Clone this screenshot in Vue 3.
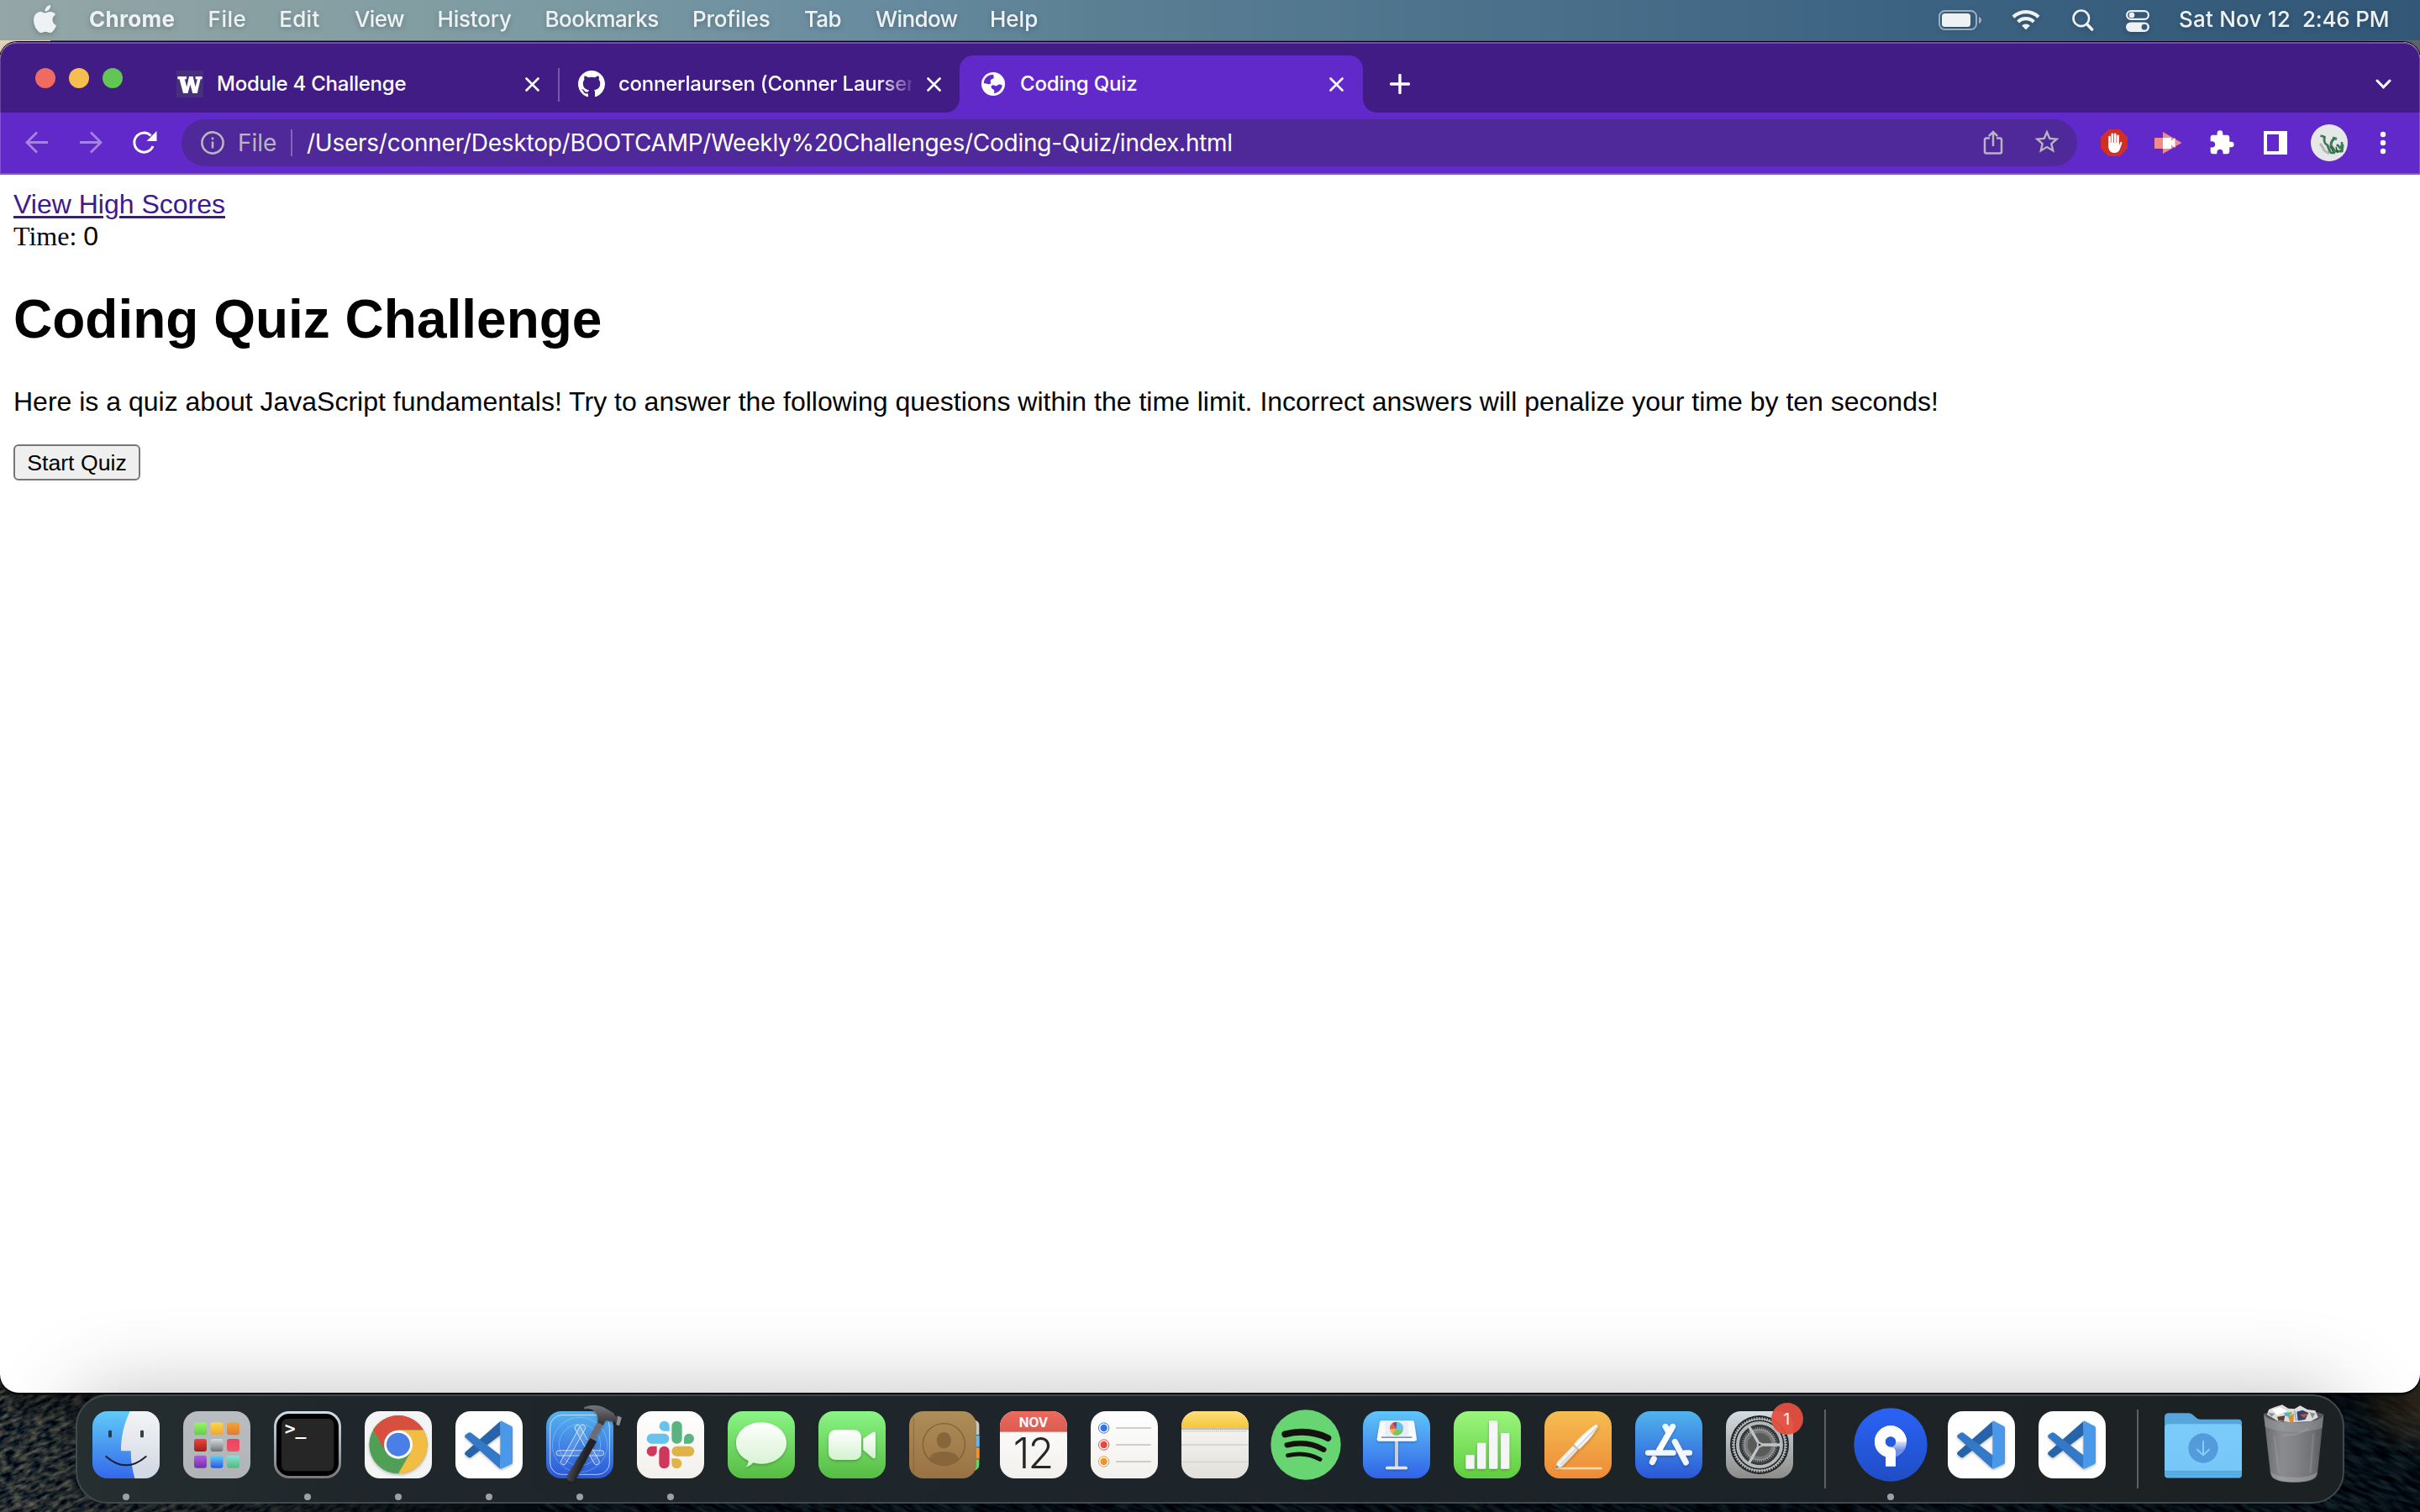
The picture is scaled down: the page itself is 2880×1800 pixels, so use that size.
<script setup>
const menus = [
  { label: 'Chrome', width: 141.6, spacing: 0.3, bold: true },
  { label: 'File', width: 84.6, spacing: 0.5 },
  { label: 'Edit', width: 89.8, spacing: 0.3 },
  { label: 'View', width: 98.5, spacing: -0.6 },
  { label: 'History', width: 128, spacing: -0.2 },
  { label: 'Bookmarks', width: 175.5, spacing: -0.5 },
  { label: 'Profiles', width: 133, spacing: -0.2 },
  { label: 'Tab', width: 85, spacing: -0.7 },
  { label: 'Window', width: 136, spacing: -0.6 },
  { label: 'Help', width: 60, spacing: 0 },
]

const dock = [
  { id: 'finder', running: true },
  { id: 'launchpad' },
  { id: 'terminal', running: true },
  { id: 'chrome', running: true },
  { id: 'vscode', running: true },
  { id: 'xcode', running: true },
  { id: 'slack', running: true },
  { id: 'messages' },
  { id: 'facetime' },
  { id: 'contacts' },
  { id: 'calendar' },
  { id: 'reminders' },
  { id: 'notes' },
  { id: 'spotify' },
  { id: 'keynote' },
  { id: 'numbers' },
  { id: 'pages' },
  { id: 'appstore' },
  { id: 'settings' },
  { id: 'sep1', separator: true },
  { id: 'sourcetree', running: true },
  { id: 'vscode', key: 'vscode2' },
  { id: 'vscode', key: 'vscode3' },
  { id: 'sep2', separator: true },
  { id: 'downloads' },
  { id: 'trash' },
]

const pads = [
  ['#9bf26e', '#5fd043'], ['#fbd54b', '#f0a735'], ['#f3a637', '#dd7a33'],
  ['#e8463a', '#a61d18'], ['#d5dde2', '#6d7276'], ['#e8435e', '#ee5468'],
  ['#b45ce6', '#7131a8'], ['#5cd4fa', '#2c55e3'], ['#86e3e0', '#57b778'],
]

const gradients = [
  ['gFinder', '#60cbf8', '#3468ea'],
  ['gFace', '#f4f4f6', '#cfd7e4'],
  ['gPad', '#babdbf', '#b1b4b6'],
  ['gTerm', '#cfe0ea', '#77777a'],
  ['gXcode', '#56b4ee', '#2b56da'],
  ['gGreen', '#8af585', '#56bc43'],
  ['gBubble', '#ffffff', '#d3f2cf'],
  ['gBrown', '#ad8d58', '#997244'],
  ['gRed', '#ec6a5e', '#da5c50'],
  ['gPaper', '#ffffff', '#f1f0ec'],
  ['gYellow', '#fbe07a', '#f6c539'],
  ['gNotes', '#faf9f7', '#e2e0da'],
  ['gKeynote', '#5fc6fa', '#3163e7'],
  ['gNumbers', '#9bf57c', '#5fce40'],
  ['gPages', '#f5bd50', '#ee8b38'],
  ['gStore', '#50b4ee', '#2a57d8'],
  ['gGear', '#d3dde3', '#8e8c89'],
  ['gSource', '#2a63f6', '#1f4dc4'],
  ['gFolder', '#7bcbfa', '#76c7f8'],
  ['gSilver', '#ffffff', '#d9dbe0'],
]

const ticks = (n) => Array.from({ length: n }, (_, i) => (360 / n) * i)
</script>

<template>
  <div class="desktop">
    <svg class="wallpaper" viewBox="0 0 2880 1800">
      <defs>
        <filter id="rock" x="0" y="0" width="100%" height="100%" color-interpolation-filters="sRGB">
          <feTurbulence type="fractalNoise" baseFrequency="0.08 0.2" numOctaves="4" seed="5" />
          <feColorMatrix values="0.9 0 0 0 -0.27  0.75 0 0 0 -0.17  0.5 0 0 0 -0.04  0 0 0 0 1" />
        </filter>
        <filter id="water" x="0" y="0" width="100%" height="100%" color-interpolation-filters="sRGB">
          <feTurbulence type="fractalNoise" baseFrequency="0.04 0.2" numOctaves="4" seed="9" />
          <feColorMatrix values="0.25 0 0 0 -0.1  0.3 0 0 0 -0.085  0.32 0 0 0 -0.065  0 0 0 0 1" />
        </filter>
        <linearGradient id="shoreFade" x1="0" x2="1" y1="0" y2="0">
          <stop offset="0" stop-color="#050d12" stop-opacity="0" />
          <stop offset="0.2" stop-color="#050d12" stop-opacity="0.2" />
          <stop offset="1" stop-color="#050d12" stop-opacity="1" />
        </linearGradient>
        <radialGradient id="outcrop" cx="2880" cy="1655" r="85" gradientUnits="userSpaceOnUse">
          <stop offset="0" stop-color="#5b4524" stop-opacity="0.6" />
          <stop offset="0.6" stop-color="#46361f" stop-opacity="0.4" />
          <stop offset="1" stop-color="#2a2216" stop-opacity="0" />
        </radialGradient>
      </defs>
      <rect width="60" height="120" y="0" fill="#e6d6b9" />
      <rect x="60" width="2760" height="60" y="0" fill="#52606c" />
      <rect x="2820" width="60" height="120" y="0" fill="#5c6570" />
      <g transform="rotate(25 1400 1700)">
        <rect x="0" y="900" width="2900" height="1500" filter="url(#water)" />
      </g>
      <g transform="rotate(-24 100 1700)">
        <rect x="-200" y="1400" width="720" height="600" filter="url(#rock)" opacity="0.9" />
      </g>
      <rect x="0" y="1500" width="640" height="300" fill="url(#shoreFade)" />
      <rect x="2780" y="1600" width="100" height="130" fill="url(#outcrop)" />
    </svg>

    <svg class="defs" width="0" height="0">
      <defs>
        <linearGradient v-for="g in gradients" :id="g[0]" :key="g[0]" x1="0" y1="0" x2="0" y2="1">
          <stop offset="0" :stop-color="g[1]" />
          <stop offset="1" :stop-color="g[2]" />
        </linearGradient>
        <linearGradient v-for="(p, i) in pads" :id="'pad' + i" :key="i" x1="0" y1="0" x2="0" y2="1">
          <stop offset="0" :stop-color="p[0]" />
          <stop offset="1" :stop-color="p[1]" />
        </linearGradient>
        <linearGradient id="gBin" x1="0" y1="0" x2="1" y2="0">
          <stop offset="0" stop-color="#6c6e71" />
          <stop offset="0.3" stop-color="#8f9194" />
          <stop offset="0.55" stop-color="#85878a" />
          <stop offset="0.8" stop-color="#747679" />
          <stop offset="1" stop-color="#5a5c5f" />
        </linearGradient>
        <linearGradient id="gHandle" x1="0" y1="0" x2="1" y2="0.5">
          <stop offset="0.35" stop-color="#4a4a50" />
          <stop offset="0.65" stop-color="#222226" />
        </linearGradient>
        <linearGradient id="gHead" x1="0" y1="0" x2="0" y2="1">
          <stop offset="0" stop-color="#75757b" />
          <stop offset="1" stop-color="#2d2d31" />
        </linearGradient>
        <linearGradient id="gRing" x1="0" y1="0" x2="0" y2="1">
          <stop offset="0.35" stop-color="#fff" />
          <stop offset="0.9" stop-color="#fff" stop-opacity="0.35" />
        </linearGradient>
        <filter id="soft" x="-20%" y="-20%" width="140%" height="150%">
          <feDropShadow dx="0" dy="4" stdDeviation="4" flood-color="#000" flood-opacity="0.28" />
        </filter>
      </defs>
    </svg>

    <header class="menubar">
      <svg class="apple" width="27" height="33" viewBox="2.2 0 19.6 24" preserveAspectRatio="none">
        <path fill="currentColor" d="M12.152 6.896c-.948 0-2.415-1.078-3.96-1.04-2.04.027-3.91 1.183-4.961 3.014-2.117 3.675-.546 9.103 1.519 12.09 1.013 1.454 2.208 3.09 3.792 3.039 1.52-.065 2.09-.987 3.935-.987 1.831 0 2.35.987 3.96.948 1.637-.026 2.676-1.48 3.676-2.948 1.156-1.688 1.636-3.325 1.662-3.415-.039-.013-3.182-1.221-3.22-4.857-.026-3.04 2.48-4.494 2.597-4.559-1.429-2.09-3.623-2.324-4.39-2.376-2-.156-3.675 1.09-4.61 1.09zM15.53 3.83c.843-1.012 1.4-2.427 1.245-3.83-1.207.052-2.662.805-3.532 1.818-.78.896-1.454 2.338-1.273 3.714 1.338.104 2.715-.688 3.559-1.701" />
      </svg>
      <nav class="menus">
        <span
          v-for="m in menus"
          :key="m.label"
          class="menu"
          :class="{ bold: m.bold }"
          :style="{ width: m.width + 'px', letterSpacing: m.spacing + 'px' }"
        >{{ m.label }}</span>
      </nav>
      <div class="status">
        <svg class="battery" width="52" height="24" viewBox="0 0 52 24">
          <rect x="1" y="1" width="44" height="22" rx="6.5" fill="none" stroke="#fff" stroke-opacity=".5" stroke-width="2" />
          <rect x="4" y="4" width="34" height="16" rx="3.5" fill="currentColor" />
          <path d="M48 8 q3 1 3 4 t-3 4z" fill="#fff" fill-opacity=".5" />
        </svg>
        <svg class="wifi" width="34" height="25" viewBox="0 0 34 25">
          <g fill="none" stroke="currentColor" stroke-width="4.2">
            <path d="M2 9.2 a21.5 21.5 0 0 1 30 0" />
            <path d="M7.6 15 a13.5 13.5 0 0 1 18.8 0" />
          </g>
          <path d="M17 24.5 l-4.9 -5 a7 7 0 0 1 9.8 0z" fill="currentColor" />
        </svg>
        <svg class="search" width="26" height="26" viewBox="0 0 26 26" fill="none" stroke="currentColor">
          <circle cx="10.8" cy="10.8" r="9.3" stroke-width="2.6" />
          <path d="M17.6 17.8 L23.6 24" stroke-width="3.6" stroke-linecap="round" />
        </svg>
        <svg class="control" width="28" height="26" viewBox="0 0 28 26">
          <rect x="1.1" y="1.1" width="25.8" height="9.8" rx="4.9" fill="none" stroke="currentColor" stroke-width="2.2" />
          <circle cx="7" cy="6" r="3.3" fill="currentColor" />
          <rect x="0" y="14.4" width="28" height="11.6" rx="5.8" fill="currentColor" />
          <circle cx="22" cy="20.2" r="3.4" fill="#355b7c" />
        </svg>
        <span class="date">Sat Nov 12</span>
        <span class="clock">2:46 PM</span>
      </div>
    </header>

    <main class="window">
      <div class="tabstrip">
        <div class="lights"><i class="red" /><i class="amber" /><i class="green" /></div>
        <div class="tab first">
          <svg width="32" height="32" viewBox="0 0 32 32">
            <rect width="32" height="32" fill="#46307c" />
            <path fill="#fff" d="M1.400 7H12v3.200H9.800l2.500 9.200L15 7h4.600l3 12.400 2.200-9.200h-2.200V7h8v3.200h-2L24.800 27h-5.600L16.400 16.500 13.600 27H8L3.600 10.200H1.400z" />
          </svg>
          <span class="title">Module 4 Challenge</span>
          <svg class="close" width="17" height="17" viewBox="0 0 17 17"><path d="M1.500 1.500L15.500 15.500M15.500 1.500L1.500 15.500" /></svg>
        </div>
        <div class="tab second">
          <svg width="32" height="32" viewBox="0 0 16 16">
            <path fill="#fff" d="M8 0C3.58 0 0 3.58 0 8c0 3.54 2.29 6.53 5.47 7.59.4.07.55-.17.55-.38 0-.19-.01-.82-.01-1.49-2.01.37-2.53-.49-2.69-.94-.09-.23-.48-.94-.82-1.13-.28-.15-.68-.52-.01-.53.63-.01 1.08.58 1.23.82.72 1.21 1.87.87 2.33.66.07-.52.28-.87.51-1.07-1.78-.2-3.64-.89-3.64-3.95 0-.87.31-1.59.82-2.15-.08-.2-.36-1.02.08-2.12 0 0 .67-.21 2.2.82.64-.18 1.32-.27 2-.27.68 0 1.36.090 2 .27 1.530-1.040 2.200-.82 2.200-.82.44 1.100.16 1.920.080 2.120.51.56.82 1.270.82 2.150 0 3.070-1.870 3.750-3.650 3.950.29.25.54.73.54 1.480 0 1.070-.01 1.930-.01 2.200 0 .21.15.46.55.38A8.013 8.013 0 0016 8c0-4.420-3.580-8-8-8z" />
          </svg>
          <span class="title fade">connerlaursen (Conner Laursen)</span>
          <svg class="close" width="17" height="17" viewBox="0 0 17 17"><path d="M1.500 1.500L15.500 15.500M15.500 1.500L1.500 15.500" /></svg>
        </div>
        <div class="tab active">
          <svg width="28" height="28" viewBox="0 0 28 28">
            <circle cx="14" cy="14" r="14" fill="#fff" />
            <path fill="#6129ca" d="M14.500 2.800C13.500 5 16 6 14 7.500c-1.500 1-3 .5-3.300 2.500-.3 1.500 1 1.800.3 3.200-.8 1.300-3 1-4.500.6L2.800 13C3 7.500 7.500 2.900 14.500 2.800z" />
            <path fill="#6129ca" d="M11.500 17.500c0-2.200 3-3 4.200-1.700 1 1.200 2.800.2 3.800-.6 1.200-1 3.600-1.200 5.200.8-.8 4.600-4.600 8.600-9.800 9.100-.4-1 .6-1.600.5-3-.2-2-3.900-2-3.900-4.600z" />
          </svg>
          <span class="title">Coding Quiz</span>
          <svg class="close" width="17" height="17" viewBox="0 0 17 17"><path d="M1.500 1.500L15.500 15.500M15.500 1.500L1.500 15.500" /></svg>
        </div>
        <svg class="plus" width="24" height="24" viewBox="0 0 24 24"><path d="M12 1.500V22.500M1.500 12H22.500" /></svg>
        <svg class="chevron" width="19" height="13" viewBox="0 0 19 13"><path d="M2 2L9.500 9.800L17 2" /></svg>
      </div>

      <div class="toolbar">
        <svg class="tool dim" viewBox="0 0 64 64"><path d="M45 31.500H20M32 19.500L20 31.500L32 43.500" /></svg>
        <svg class="tool dim" viewBox="0 0 64 64"><path d="M19 31.500H44M32 19.500L44 31.500L32 43.500" /></svg>
        <svg class="tool" viewBox="0 0 64 64">
          <path d="M42 36A11.500 11.500 0 1 1 39.500 23.500" stroke-width="3" />
          <path d="M46.500 18V30H34.500z" fill="#fff" stroke="none" />
        </svg>
        <div class="omnibox">
          <svg width="28" height="28" viewBox="0 0 28 28">
            <circle cx="14" cy="14" r="12.600" fill="none" stroke="#b9b5bf" stroke-width="2.600" />
            <path d="M12.700 12.500h2.600v8h-2.600zM12.700 7.500h2.600v2.700h-2.600z" fill="#b9b5bf" />
          </svg>
          <span class="scheme">File</span>
          <i class="bar" />
          <span class="url">/Users/conner/Desktop/BOOTCAMP/Weekly%20Challenges/Coding-Quiz/index.html</span>
          <svg class="tool grey" viewBox="0 0 64 64">
            <path d="M28 26.500H24a2 2 0 0 0 -2 2V42.500a2 2 0 0 0 2 2H40a2 2 0 0 0 2 -2V28.500a2 2 0 0 0 -2 -2H36M32 36V19.500M26.800 24.200L32 19L37.200 24.200" stroke-width="2.500" />
          </svg>
          <svg class="tool grey" viewBox="0 0 64 64">
            <path transform="translate(14.600 13.300) scale(1.45)" fill="#b9b5bf" stroke="none" d="M22 9.240l-7.190-.62L12 2 9.190 8.630 2 9.240l5.460 4.730L5.820 21 12 17.270 18.180 21l-1.630-7.030L22 9.240zM12 15.400l-3.760 2.270 1-4.280-3.320-2.880 4.380-.38L12 6.100l1.710 4.040 4.380.38-3.320 2.880 1 4.280L12 15.400z" />
          </svg>
        </div>
        <svg class="tool" viewBox="0 0 64 64">
          <path d="M25.300 16H38.700L48 25.300V38.700L38.700 48H25.300L16 38.700V25.300z" fill="#d12f26" stroke="none" />
          <path d="M26.500 36V25M29.800 32V21.800M33.200 32V21.800M36.500 34V23.800" stroke-width="2.600" stroke-linecap="round" />
          <path d="M25.200 32H37.800v3.500l1.700-4.500q2.400-.8 1.800 1.800L38.700 40q-1.800 4-6.500 4q-5.500 0-7-6z" fill="#fff" stroke="none" />
        </svg>
        <svg class="tool" viewBox="0 0 64 64">
          <path d="M26 19L48.500 32L26 45V39H16V26H26z" fill="#f08a8e" stroke="none" />
          <path d="M26 26H36V29.500L40.500 26V38L36 34.500V39H26z" fill="#fff" stroke="none" />
        </svg>
        <svg class="tool" viewBox="0 0 64 64">
          <path transform="translate(16 16) scale(1.33)" fill="#fff" stroke="none" d="M20.500 11H19V7c0-1.100-.9-2-2-2h-4V3.500a2.500 2.500 0 0 0-5 0V5H4c-1.100 0-1.990.9-1.990 2v3.800H3.500c1.490 0 2.700 1.210 2.700 2.700s-1.210 2.700-2.700 2.700H2V20c0 1.100.9 2 2 2h3.800v-1.500c0-1.490 1.210-2.700 2.700-2.700 1.490 0 2.700 1.210 2.700 2.700V22H17c1.100 0 2-.9 2-2v-4h1.500a2.500 2.500 0 0 0 0-5z" />
        </svg>
        <svg class="tool" viewBox="0 0 64 64">
          <path fill="#fff" stroke="none" fill-rule="evenodd" d="M18 18H46V46H18zM22 22V42H36V22z" />
        </svg>
        <svg class="tool" viewBox="0 0 64 64">
          <circle cx="32" cy="32" r="22" fill="#e6e8e7" stroke="none" />
          <path d="M21 33q3 3 5 8l6 4" stroke="#b3b9b6" stroke-width="3" />
          <g fill="none" stroke="#3c7a55" stroke-linejoin="round">
            <path d="M21.500 23.500l5 1.500q-2 7 3.500 10 l3 8" stroke-width="2.800" />
            <path d="M36 26l5 1.500M38 27q-4 3-4 8l5 7h8l1-7-3 3-4-4" stroke-width="3" />
            <path d="M30 36l4 8h5M47 31v12" stroke-width="2.600" />
          </g>
          <path d="M33 36l4 7M40 37l2 7" stroke="#23533a" stroke-width="1.500" />
        </svg>
        <svg class="tool" viewBox="0 0 64 64">
          <g fill="#fff" stroke="none"><circle cx="32" cy="22" r="3.200" /><circle cx="32" cy="32" r="3.200" /><circle cx="32" cy="42" r="3.200" /></g>
        </svg>
      </div>

      <section class="page">
        <a class="scores">View High Scores</a>
        <div class="timer">Time: <span>0</span></div>
        <h1>Coding Quiz Challenge</h1>
        <p>Here is a quiz about JavaScript fundamentals! Try to answer the following questions within the time limit. Incorrect answers will penalize your time by ten seconds!</p>
        <button type="button">Start Quiz</button>
      </section>
    </main>

    <footer class="dock">
      <template v-for="app in dock" :key="app.key || app.id">
        <i v-if="app.separator" class="separator" />
        <div v-else class="cell">
          <svg class="icon" viewBox="0 0 240 240">
            <g v-if="app.id === 'finder'">
              <clipPath id="cFinder"><rect width="240" height="240" rx="54" /></clipPath>
              <g clip-path="url(#cFinder)">
                <rect width="240" height="240" fill="url(#gFinder)" />
                <path d="M134 0C110 50 102 98 102 138q0 4 4 4H137C137 178 143 212 151 240H240V0z" fill="url(#gFace)" />
              </g>
              <rect x="57" y="68" width="12" height="26" rx="4" fill="#2b3a48" />
              <rect x="171" y="68" width="12" height="26" rx="4" fill="#3a3c40" />
              <path d="M49 162Q120 224 191 162" fill="none" stroke="#16202c" stroke-width="6" stroke-linecap="round" />
            </g>

            <g v-else-if="app.id === 'launchpad'">
              <rect width="240" height="240" rx="54" fill="url(#gPad)" />
              <rect v-for="(p, i) in pads" :key="i" :x="39 + (i % 3) * 58.500" :y="40 + Math.floor(i / 3) * 59" width="45" height="45" rx="9" :fill="'url(#pad' + i + ')'" />
            </g>

            <g v-else-if="app.id === 'terminal'">
              <rect width="240" height="240" rx="54" fill="url(#gTerm)" />
              <rect x="9" y="9" width="222" height="222" rx="46" fill="#000" />
              <rect x="27" y="27" width="187" height="187" rx="20" fill="#262626" />
              <text x="38" y="84" class="prompt">&gt;_</text>
            </g>

            <g v-else-if="app.id === 'chrome'">
              <rect width="240" height="240" rx="54" fill="#f4f4f4" />
              <g transform="translate(120 119)">
                <g filter="url(#soft)">
                  <circle r="104" fill="#4fa057" />
                  <path d="M0-52H90A104 104 0 0 1 0 104L45 26 0 0z" fill="#f2bd42" />
                  <path d="M-90-52A104 104 0 0 1 90-52H0V0L-45 26z" fill="#d85040" />
                </g>
                <circle r="51" fill="#fff" />
                <circle r="42" fill="#4a7fe8" />
              </g>
            </g>

            <g v-else-if="app.id === 'vscode'">
              <rect width="240" height="240" rx="54" fill="#fff" />
              <g filter="url(#soft)">
                <path d="M160 36L35 146q-4 5 0 9L46 164q5 3 10 0L162 84z" fill="#2864a8" />
                <path d="M160 206L35 94q-4-5 0-9L46 77q5-3 10 0L162 158z" fill="#3478c8" />
                <path d="M160 35Q164 34 168 37L200 53Q204 56 204 60V182Q204 187 200 189L168 204Q163 207 160 206z" fill="#4998ea" />
              </g>
            </g>

            <g v-else-if="app.id === 'xcode'">
              <rect width="240" height="240" rx="54" fill="url(#gXcode)" />
              <rect x="14" y="14" width="212" height="212" rx="42" fill="none" stroke="#fff" stroke-opacity=".8" stroke-width="2.500" />
              <g fill="none" stroke="#cfe6fb" stroke-opacity=".5" stroke-width="2">
                <circle cx="120" cy="120" r="98" /><circle cx="120" cy="120" r="74" />
              </g>
              <g fill="#fff" fill-opacity=".12" stroke="#e3f1fd" stroke-opacity=".9" stroke-width="2.500">
                <rect x="-10" y="-80" width="20" height="160" rx="10" transform="translate(96 120) rotate(29)" />
                <rect x="-10" y="-80" width="20" height="160" rx="10" transform="translate(146 120) rotate(-29)" />
                <rect x="36" y="140" width="170" height="19" rx="9.500" />
              </g>
              <g filter="url(#soft)">
                <path d="M185 35L205 46 164 120 146 108z" fill="#6d6d73" />
                <path d="M157 96L180 108 106 243Q102 256 84 251 68 242 76 228z" fill="url(#gHandle)" />
                <path d="M135-14Q170-28 205-14L240 6 249 20 256 15 270 22 262 54 250 50 246 38 234 36 212 34 203 50 184 40Q188 12 168-3 152-12 137-7z" fill="url(#gHead)" />
                <path d="M256 17L269 23 261 52 250 48z" fill="#8d8e95" />
              </g>
            </g>

            <g v-else-if="app.id === 'slack'">
              <rect width="240" height="240" rx="54" fill="url(#gPaper)" />
              <g fill="#67c2ec"><rect x="35" y="80" width="80" height="36" rx="18" /><path d="M116 71H98a18 18 0 1 1 18-18z" /></g>
              <g fill="#5cb382"><rect x="124" y="35" width="37" height="81" rx="18" /><path d="M168 116V98a18 18 0 1 1 18 18z" /></g>
              <g fill="#e0b34a"><rect x="124" y="125" width="81" height="36" rx="18" /><path d="M124 169H142a18 18 0 1 1-18 18z" /></g>
              <g fill="#cf375c"><rect x="79" y="125" width="37" height="80" rx="18" /><path d="M71 125V143a18 18 0 1 1-18-18z" /></g>
            </g>

            <g v-else-if="app.id === 'messages'">
              <rect width="240" height="240" rx="54" fill="url(#gGreen)" />
              <g filter="url(#soft)" fill="url(#gBubble)">
                <path d="M120 40C170 40 210 73 210 114S170 188 120 188Q103 188 90 184 80 197 63 200 74 192 74 177 30 155 30 114C30 73 70 40 120 40z" />
              </g>
            </g>

            <g v-else-if="app.id === 'facetime'">
              <rect width="240" height="240" rx="54" fill="url(#gGreen)" />
              <g filter="url(#soft)" fill="url(#gBubble)">
                <rect x="36" y="67" width="117" height="107" rx="25" />
                <path d="M160 98L194 75Q204 70 204 80V162Q204 172 194 167L160 138z" />
              </g>
            </g>

            <g v-else-if="app.id === 'contacts'">
              <g>
                <path d="M225 30Q250 32 250 50V84H225z" fill="#c9c9c9" />
                <rect x="225" y="86" width="26" height="42" fill="#68b7ea" />
                <rect x="225" y="130" width="26" height="40" fill="#ee9638" />
                <path d="M225 172H250V190Q250 206 235 212H225z" fill="#68d468" />
              </g>
              <rect width="240" height="240" rx="50" fill="url(#gBrown)" />
              <path d="M16 22V218" stroke="#7f6039" stroke-width="3" opacity=".7" />
              <g stroke="#81613a" fill="none" stroke-width="4">
                <circle cx="124" cy="119" r="75" />
              </g>
              <ellipse cx="124" cy="104" rx="26" ry="29" fill="#87663b" />
              <path d="M72 170Q78 145 124 145 170 145 176 170 154 195 124 195 94 195 72 170z" fill="#87663b" />
            </g>

            <g v-else-if="app.id === 'calendar'">
              <clipPath id="cCal"><rect width="240" height="240" rx="54" /></clipPath>
              <g clip-path="url(#cCal)">
                <rect width="240" height="240" fill="url(#gPaper)" />
                <rect width="240" height="74" fill="url(#gRed)" />
              </g>
              <text x="120" y="58" class="month">NOV</text>
              <text x="117" y="205" class="day">12</text>
            </g>

            <g v-else-if="app.id === 'reminders'">
              <rect width="240" height="240" rx="54" fill="url(#gPaper)" />
              <g v-for="(c, i) in ['#2f74ee', '#e5493c', '#ea9430']" :key="c">
                <circle cx="47" :cy="60 + i * 60" r="18.500" fill="#fff" :stroke="c" stroke-width="3" />
                <circle cx="47" :cy="60 + i * 60" r="12.500" :fill="c" />
                <rect x="90" :y="58 + i * 60" width="125" height="4" fill="#b9b9bd" />
              </g>
            </g>

            <g v-else-if="app.id === 'notes'">
              <clipPath id="cNotes"><rect width="240" height="240" rx="54" /></clipPath>
              <g clip-path="url(#cNotes)">
                <rect width="240" height="240" fill="url(#gNotes)" />
                <rect width="240" height="61" fill="url(#gYellow)" />
                <rect y="61" width="240" height="5" fill="#b7b5b0" />
                <path d="M4 71H236" stroke="#bdbbb7" stroke-width="4" stroke-dasharray="4 3" />
                <path d="M0 120H240M0 181H240" stroke="#d3d1ce" stroke-width="4" />
              </g>
            </g>

            <g v-else-if="app.id === 'spotify'">
              <circle cx="120" cy="120" r="125" fill="#67d572" />
              <g fill="none" stroke="#12130f" stroke-linecap="round">
                <path d="M46 82Q130 62 199 96" stroke-width="24" />
                <path d="M53 121Q125 103 184 137" stroke-width="19" />
                <path d="M56 158Q120 143 171 172" stroke-width="15" />
              </g>
            </g>

            <g v-else-if="app.id === 'keynote'">
              <rect width="240" height="240" rx="54" fill="url(#gKeynote)" />
              <g filter="url(#soft)">
                <rect x="114" y="105" width="12" height="95" fill="#c9ced8" />
                <rect x="81" y="197" width="78" height="11" rx="5" fill="#e3e6ec" />
                <path d="M66 34H177Q182 34 183 39L192 100Q192 107 185 107H57Q50 107 50 100L60 39Q61 34 66 34z" fill="#f6f9fd" />
              </g>
              <path d="M79 38H161V89H79z" fill="#e8eef6" />
              <rect x="66" y="91" width="109" height="5" fill="#7b93b4" />
              <g transform="translate(120 62)">
                <circle r="24" fill="#e9b451" />
                <path d="M0 0V-24A24 24 0 0 1 22 10z" fill="#63c3ee" />
                <path d="M0 0L22 10A24 24 0 0 1 -14 20z" fill="#79c661" />
                <path d="M0 0L-24 2A24 24 0 0 1-15-19z" fill="#df6350" />
                <path d="M0 0L-15-19A24 24 0 0 1 0-24z" fill="#8f3f8c" />
              </g>
            </g>

            <g v-else-if="app.id === 'numbers'">
              <rect width="240" height="240" rx="54" fill="url(#gNumbers)" />
              <g fill="#f3f5f6" filter="url(#soft)">
                <rect x="43" y="156" width="31" height="50" rx="4" /><rect x="84" y="113" width="31" height="93" rx="4" />
                <rect x="126" y="34" width="31" height="172" rx="4" /><rect x="168" y="78" width="31" height="128" rx="4" />
              </g>
            </g>

            <g v-else-if="app.id === 'pages'">
              <rect width="240" height="240" rx="54" fill="url(#gPages)" />
              <path d="M42 204H203" stroke="#fbdcae" stroke-width="7" stroke-linecap="round" />
              <g filter="url(#soft)" transform="translate(38 206) rotate(-46)">
                <path d="M0 0L16-8 24-11H110V11H24L16 8z" fill="#f3f3f3" />
                <path d="M110-13Q170-16 212-6 222 0 212 6 170 16 110 13z" fill="#fff" />
                <rect x="104" y="-12" width="5" height="24" fill="#a9a9ad" />
                <path d="M24 4H210" stroke="#cfd1d5" stroke-width="5" />
                <path d="M0 0L14-6V6z" fill="#8b7a62" />
              </g>
            </g>

            <g v-else-if="app.id === 'appstore'">
              <rect width="240" height="240" rx="54" fill="url(#gStore)" />
              <g filter="url(#soft)" fill="none" stroke-linecap="round">
                <path d="M108 55L120 76M142 109L181 183M67 170L61 182" stroke="#f2f5fa" stroke-width="21" />
                <path d="M134 55L86 138" stroke="#fff" stroke-width="21" />
                <path d="M46 148.500H136" stroke="#f2f5fa" stroke-width="20" />
                <path d="M178 148.500H194" stroke="#f2f5fa" stroke-width="20" />
              </g>
            </g>

            <g v-else-if="app.id === 'settings'">
              <rect width="240" height="240" rx="54" fill="url(#gGear)" />
              <g transform="translate(120 120)">
                <circle r="105" fill="#222325" />
                <circle r="92" fill="none" stroke="#a2a7a9" stroke-width="5" />
                <path v-for="a in ticks(64)" :key="a" :transform="'rotate(' + a + ')'" d="M0-99V-88" stroke="#b5babc" stroke-width="4.500" />
                <circle r="78" fill="none" stroke="#b3b8ba" stroke-width="12" />
                <circle r="71" fill="#3a3b3d" />
                <path v-for="a in ticks(48)" :key="'i' + a" :transform="'rotate(' + a + ')'" d="M0-63V-52" stroke="#8b8f90" stroke-width="3.500" />
                <circle r="54" fill="#77797a" stroke="#9a9d9e" stroke-width="4" />
                <circle r="42" fill="#5a5a59" />
                <path d="M0 0H76M0 0L-38 66M0 0L-38-66" stroke="#c0c5c7" stroke-width="10" />
                <circle r="10" fill="#b5babc" /><circle r="4" fill="#333" />
              </g>
              <circle cx="219" cy="27" r="57" fill="#e5503f" fill-opacity=".95" />
              <text x="217" y="48" class="badge">1</text>
            </g>

            <g v-else-if="app.id === 'sourcetree'">
              <circle cx="120" cy="120" r="131" fill="url(#gSource)" />
              <circle cx="120" cy="109" r="38" fill="none" stroke="url(#gRing)" stroke-width="38" />
              <path d="M120 52A57 57 0 0 0 63 109C63 136 79 154 102 163V197H138V146Q138 128 120 128A19 19 0 1 1 139 109H177A57 57 0 0 0 120 52z" fill="#fff" />
            </g>

            <g v-else-if="app.id === 'downloads'">
              <path d="M-18 22Q-18 7-3 7H68Q76 7 82 12L96 24Q101 29 110 29H246Q258 29 258 42V90H-18z" fill="#56a6dc" />
              <path d="M-18 62Q-18 46-3 46H244Q258 46 258 62V224Q258 238 244 238H-4Q-18 238-18 224z" fill="url(#gFolder)" />
              <path d="M-18 212H258V224Q258 238 244 238H-4Q-18 238-18 224z" fill="#5bb0e6" />
              <path d="M-18 216H258M-18 226H258" stroke="#4d9fd8" stroke-width="2" />
              <circle cx="120" cy="132" r="53" fill="#549bdb" />
              <path d="M120 107V156M99 137L120 157 141 137" fill="none" stroke="#82cdfa" stroke-width="6" stroke-linecap="round" stroke-linejoin="round" />
            </g>

            <g v-else-if="app.id === 'trash'">
              <path d="M12 10Q60-4 120-2 190-4 226 12L204 222Q202 254 120 254 40 254 36 222z" fill="url(#gBin)" opacity=".95" />
              <path d="M12 10Q30 40 120 40 210 40 226 12 190-4 120-3 50-4 12 10z" fill="#55575a" />
              <g>
                <path d="M24 12L30-6 50-14 78-23 100-10 122-8 142-20 168-6 196-2 206 22 180 36 110 40 60 34z" fill="#dcdcdc" />
                <path d="M42-6L70-14 96 0 60 14z" fill="#fff" />
                <path d="M84 6L110 4 104 22 88 16z" fill="#49b4d8" />
                <path d="M92 6L114 3 110 14z" fill="#74c447" />
                <path d="M100 20L120 8 118 40 106 40z" fill="#d98b3f" />
                <path d="M60 20L88 16 84 36 64 32z" fill="#5b4038" />
                <path d="M130 2L150-4 172 6 160 30 134 34z" fill="#33406c" />
                <path d="M142 12L172 8 156 24z" fill="#c4542f" />
                <path d="M28 6L52 8 40 20zM176 4L196 8 186 26z" fill="#8e8f91" />
                <path d="M122-2L128 34" stroke="#8e8e8e" stroke-width="3" />
              </g>
              <path d="M12 12Q30 42 120 42 210 42 226 14L221 60Q170 76 120 74 60 74 17 56z" fill="#a4a6a9" opacity=".4" />
              <path d="M80 86Q130 88 170 62M50 90L66 220M190 80L178 220" stroke="#c2c4c6" stroke-width="7" opacity=".2" fill="none" />
              <path d="M38 218Q60 236 120 236 180 236 203 218 202 252 120 253 38 252 38 218z" fill="#b3b5b8" opacity=".4" />
            </g>
          </svg>
          <i v-if="app.running" class="dot" />
        </div>
      </template>
    </footer>
  </div>
</template>

<style>
body {
  margin: 0;
  background: #060c11;
}
</style>

<style scoped>
.desktop {
  position: relative;
  width: 2880px;
  height: 1800px;
  overflow: hidden;
  display: flex;
  flex-direction: column;
  font-family: Inter, "Noto Sans", sans-serif;
}
.wallpaper {
  position: absolute;
  inset: 0;
  width: 2880px;
  height: 1800px;
}
.defs {
  position: absolute;
}

.menubar {
  position: relative;
  z-index: 1;
  flex: none;
  height: 48px;
  display: flex;
  align-items: center;
  background: linear-gradient(90deg, #94a6a7 0, #8ba1a4 260px, #7c9ba2 640px, #6a8da0 1000px, #5b8094 1300px, #4a708b 1800px, #3c6282 2300px, #325777 2880px);
  color: #eef2f4;
  font-size: 26px;
  font-weight: 500;
  white-space: nowrap;
}
.menubar svg,
.menu,
.date,
.clock {
  filter: drop-shadow(0 2px 3px rgba(0, 0, 0, 0.22));
}
.apple {
  margin: 0 39px 4px 40px;
}
.menus {
  display: flex;
  flex: 1;
  padding-bottom: 3px;
}
.menu.bold {
  font-weight: 700;
}
.status {
  display: flex;
  align-items: center;
  padding-right: 38px;
}
.wifi {
  margin: 0 38px 2px 35px;
}
.control {
  margin: 2px 35px 0 38px;
}
.date,
.clock {
  padding-bottom: 3px;
  letter-spacing: 0.2px;
}
.clock {
  margin-left: 14px;
  width: 102px;
  letter-spacing: -0.2px;
}

.window {
  position: relative;
  flex: none;
  box-sizing: border-box;
  height: 1608px;
  margin-top: 2px;
  border-radius: 20px 20px 22px 22px;
  overflow: hidden;
  background: #fff;
  box-shadow: 0 0 0 1px #000, 0 2px 2px #000, 0 20px 30px rgba(0, 0, 0, 0.45);
  display: flex;
  flex-direction: column;
}
.tabstrip {
  flex: none;
  box-sizing: border-box;
  height: 84px;
  border-top: 2px solid #7150a6;
  border-left: 1px solid #6a489f;
  border-right: 1px solid #6a489f;
  border-radius: 20px 20px 0 0;
  background: #411c84;
  display: flex;
  align-items: flex-end;
  color: #fff;
}
.lights {
  width: 185px;
  box-sizing: border-box;
  padding: 0 0 29px 41px;
  display: flex;
  gap: 16px;
}
.lights i {
  width: 24px;
  height: 24px;
  border-radius: 50%;
}
.red { background: #ed6b60; }
.amber { background: #f5bf4f; }
.green { background: #62c655; }
.tab {
  position: relative;
  box-sizing: border-box;
  height: 68px;
  display: flex;
  align-items: center;
  font-size: 24px;
  font-weight: 500;
  letter-spacing: -0.24px;
}
.title {
  flex: 1;
  min-width: 0;
  margin: -2px 0 0 16px;
  white-space: nowrap;
  overflow: hidden;
}
.title.fade {
  margin-right: 18px;
  -webkit-mask-image: linear-gradient(90deg, #000 310px, transparent 355px);
  mask-image: linear-gradient(90deg, #000 310px, transparent 355px);
}
.first {
  width: 480px;
  padding: 0 24px 0 24px;
}
.first::after {
  content: "";
  position: absolute;
  right: 0;
  top: 15px;
  width: 2px;
  height: 40px;
  background: #7858a8;
}
.second {
  width: 476px;
  padding: 0 22px;
}
.active {
  width: 480px;
  padding: 0 23px 0 26px;
  border-radius: 16px 16px 0 0;
  background: #6129ca;
}
.active .title {
  margin-left: 18px;
  letter-spacing: -0.14px;
}
.active::before,
.active::after {
  content: "";
  position: absolute;
  bottom: 0;
  width: 16px;
  height: 16px;
}
.active::before {
  left: -16px;
  background: radial-gradient(circle at 0 0, transparent 15.5px, #6129ca 16px);
}
.active::after {
  right: -16px;
  background: radial-gradient(circle at 100% 0, transparent 15.5px, #6129ca 16px);
}
.close path,
.plus path,
.chevron path {
  fill: none;
  stroke: #fff;
  stroke-width: 2.6;
  stroke-linecap: round;
}
.plus path {
  stroke-width: 3.4;
}
.chevron path {
  stroke-width: 3;
}
.plus {
  margin: 0 auto 22px 32px;
}
.chevron {
  margin: 0 33px 27px 0;
}

.toolbar {
  flex: none;
  box-sizing: border-box;
  height: 74px;
  padding: 0 11px;
  border: solid #8253d8;
  border-width: 0 1px 2px;
  background: #6129ca;
  display: flex;
  align-items: center;
}
.tool {
  flex: none;
  width: 64px;
  height: 64px;
  fill: none;
  stroke: #fff;
  stroke-width: 2.8;
}
.dim {
  stroke: #a583e2;
}
.grey {
  stroke: #b9b5bf;
}
.omnibox {
  flex: 1;
  height: 56px;
  margin: 0 12px;
  box-sizing: border-box;
  padding: 0 4px 0 23px;
  border-radius: 28px;
  background: #4f289a;
  display: flex;
  align-items: center;
  font-size: 28px;
  white-space: nowrap;
}
.scheme {
  margin-left: 16px;
  width: 63px;
  color: #b9b5bf;
}
.bar {
  width: 2px;
  height: 32px;
  background: #8468b8;
}
.url {
  flex: 1;
  margin-left: 17px;
  color: #fff;
  letter-spacing: -0.25px;
}

.page {
  flex: 1;
  padding: 17px 16px;
  color: #000;
  font-family: "Liberation Sans", Arial, sans-serif;
  font-size: 32px;
  line-height: 37px;
}
.scores {
  display: block;
  width: max-content;
  color: #40188f;
  text-decoration: underline;
  text-decoration-thickness: 3px;
  text-underline-offset: 3px;
}
.timer {
  margin-top: 1px;
  font-family: "Liberation Serif", "Times New Roman", serif;
}
.timer span {
  font-family: "Liberation Sans", Arial, sans-serif;
}
h1 {
  margin: 43px 0;
  font-size: 64px;
  line-height: 74px;
}
p {
  margin: 0 0 32px;
  white-space: nowrap;
}
button {
  display: block;
  box-sizing: border-box;
  width: 151px;
  height: 43px;
  padding: 0;
  border: 2px solid #767676;
  border-radius: 6px;
  background: #efefef;
  color: #000;
  font: 26.67px/36px "Liberation Sans", Arial, sans-serif;
}

.dock {
  position: relative;
  flex: none;
  align-self: center;
  box-sizing: border-box;
  width: 2700px;
  height: 130px;
  margin-top: 2px;
  padding: 18px 4px 0;
  border: 2px solid #42494c;
  border-radius: 38px;
  background: linear-gradient(90deg, #262f30 0, #1f272b 300px, #1d252a 1400px, #1c2123 2700px);
  box-shadow: 0 0 100px rgba(0, 0, 0, 0.26);
  display: flex;
}
.cell {
  width: 108px;
  display: flex;
  flex-direction: column;
  align-items: center;
}
.icon {
  width: 80px;
  height: 80px;
  overflow: visible;
}
.dot {
  width: 8px;
  height: 8px;
  margin-top: 18px;
  border-radius: 50%;
  background: #9ba1a5;
}
.separator {
  width: 2px;
  height: 94px;
  margin: -2px 23px 0;
  background: #5b6062;
}
.prompt {
  font: bold 64px "DejaVu Sans Mono", monospace;
  fill: #fff;
}
.month {
  font: 700 46px Inter, sans-serif;
  text-anchor: middle;
  fill: #fff;
}
.day {
  font: 300 150px Inter, sans-serif;
  letter-spacing: -6px;
  text-anchor: middle;
  fill: #262626;
}
.badge {
  font: 400 56px Inter, sans-serif;
  text-anchor: middle;
  fill: #fff;
}
</style>
